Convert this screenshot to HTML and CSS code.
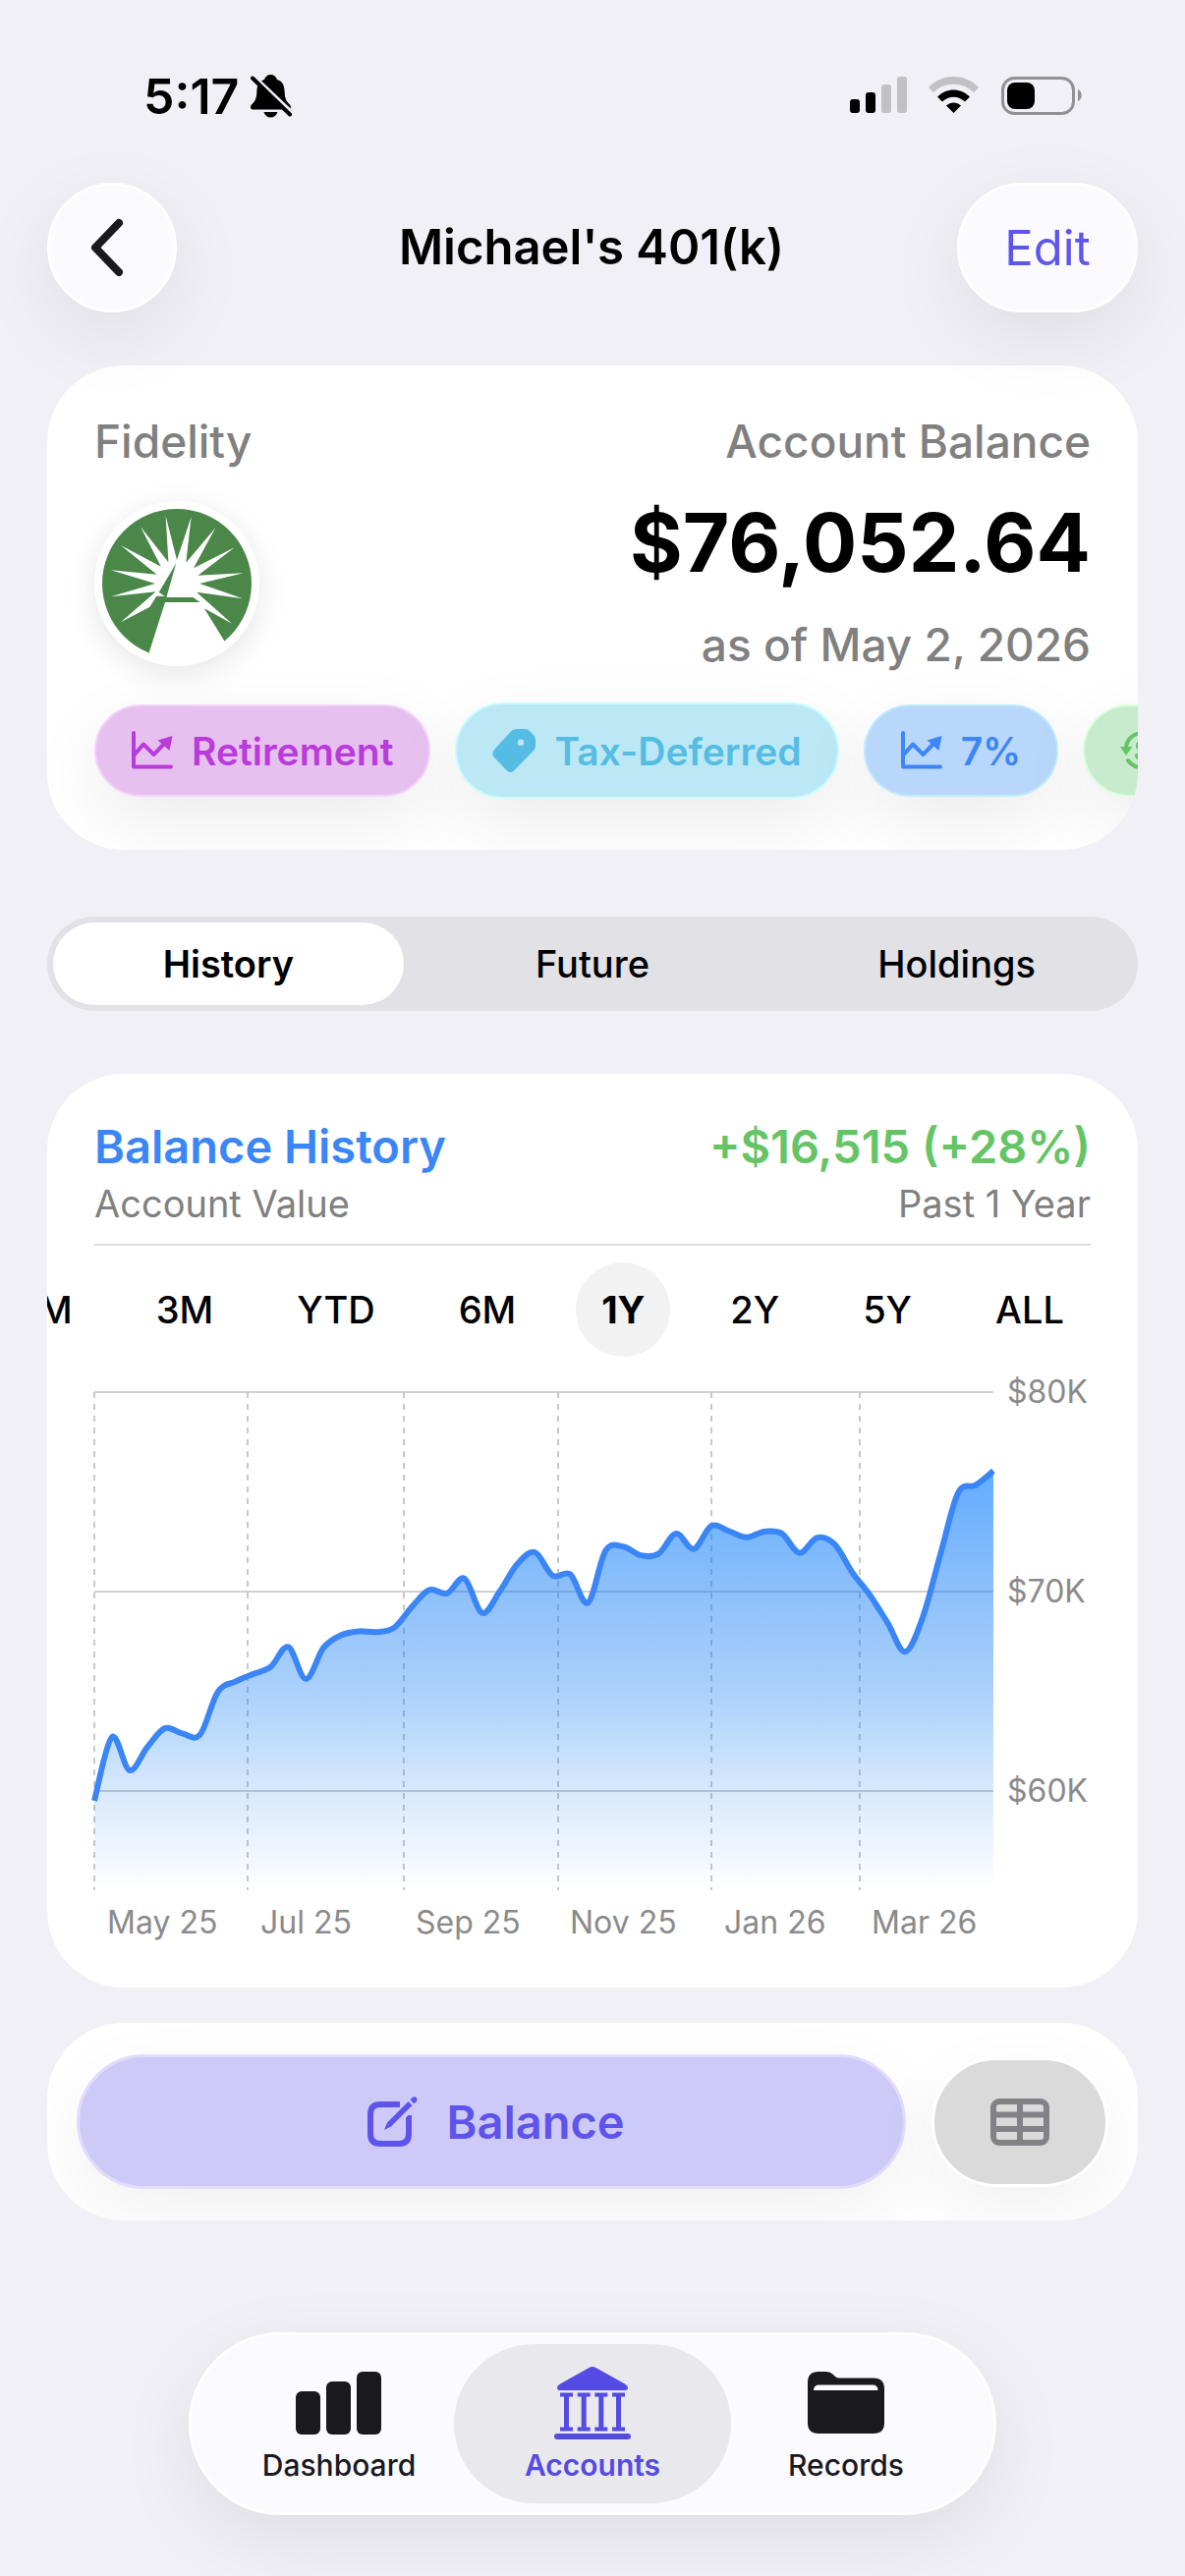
FILE: index.html
```
<!DOCTYPE html>
<html lang="en">
<head>
  <meta charset="utf-8">
  <meta name="viewport" content="width=device-width, initial-scale=1">
  <title>Michael's 401(k)</title>
  <link rel="stylesheet" href="styles.css">
</head>
<body>
  <div class="status-bar">
    <span class="time">5:17</span>
    <svg class="bell" width="42" height="44" viewBox="0 0 42 44">
      <path d="M2 35.500C-.500 35.500-.500 31.500 1.500 30 5 26.500 6 24 6.300 18 6.500 10 9 6.500 14 5 15 2 17 0 20.500 0S26 2 27 5c5 1.500 7.500 5 7.700 13 .3 6 1.300 8.500 4.800 12 2 1.500 2 5.500-.5 5.500zM13.500 38h14c-1 3.500-3.500 5.500-7 5.500S14.500 41.500 13.500 38z"/>
      <path class="bell-gap" d="M3 1.500L42 38.500" />
      <path class="bell-slash" d="M2 3.500L40 40.500" />
    </svg>
    <div class="status-icons">
      <svg width="58" height="38" viewBox="0 0 58 38">
        <rect x="0" y="23" width="10" height="14" rx="3"/>
        <rect x="16" y="16" width="10" height="21" rx="3"/>
        <rect class="dim" x="32" y="8" width="10" height="29" rx="3"/>
        <rect class="dim" x="48" y="0" width="10" height="37" rx="3"/>
      </svg>
      <svg width="52" height="38" viewBox="0 0 52 38">
        <path class="dim" d="M0 11C14-3.700 37-3.700 51 11l-5 5.200C35 5 16 5 5 16.200z"/>
        <path d="M9 20.500c9.500-9.500 23.500-9.500 33 0l-5 5c-6.500-6.300-16.500-6.300-23 0z"/>
        <path d="M18 29.500c4.500-4 10.500-4 15 0L25.500 37z"/>
      </svg>
      <svg width="84" height="40" viewBox="0 0 84 40">
        <rect class="battery-shell" x="1.500" y="1.500" width="72" height="36" rx="12"/>
        <rect x="6" y="6" width="28" height="27" rx="8"/>
        <path class="battery-tip" d="M78 13c5 2 5 10 0 12z"/>
      </svg>
    </div>
  </div>

  <header class="nav-bar">
    <button type="button" class="glass back" aria-label="Back">
      <svg width="36" height="60" viewBox="0 0 36 60"><path d="M30 5L6 30l24 25"/></svg>
    </button>
    <h1>Michael's 401(k)</h1>
    <button type="button" class="glass edit">Edit</button>
  </header>

  <main>
    <section class="card summary">
      <div class="summary-top">
        <div>
          <div class="label">Fidelity</div>
          <svg class="logo" width="168" height="168" viewBox="0 0 168 168">
            <circle cx="84" cy="84" r="76" fill="#4a8749"/>
            <path fill="#fff" d="M84 60L98.600 16 93.300 62.700 123.300 27.300 101 68.300 142.600 47.300 105.400 75.700 151.900 73.300 107.200 84 151 99.300 104 92.700 140 124.700 111.900 109.300 132.600 142.700 118 162H60L55.800 154 71.900 103.300 73.300 97 63.300 96.700 56.500 107.700 26.900 123.300 62.600 92.300 16.900 97.300 61.900 84 16.900 70.300 63.600 74.700 26.900 45 67.900 66.700 46.900 26 75.400 62.300 72.600 15z"/>
            <path fill="#4a8749" d="M83.300 63.300L65.800 92.700 73.300 98.300zM72.500 98h28l7 5H71.500z"/>
          </svg>
        </div>
        <div class="summary-right">
          <div class="label">Account Balance</div>
          <div class="balance">$76,052.64</div>
          <div class="label">as of May 2, 2026</div>
        </div>
      </div>
      <div class="chips">
        <button type="button" class="chip purple">
          <svg width="42" height="40" viewBox="0 0 42 40"><path class="stroke" d="M2 2v34.500h38M2 25L12 13.500 22.500 24 35 11"/><path d="M26.500 9.500L41.500 5 38.500 20z"/></svg>
          Retirement
        </button>
        <button type="button" class="chip cyan">
          <svg width="44" height="44" viewBox="0 0 44 44"><path fill-rule="evenodd" d="M20 1.500Q22 0 25 0H33Q36 0 38 2L42 6Q44 8 44 11V17Q44 20 42 22L22 42.500Q18.500 45.500 15 42.500L2 29Q-1.500 25 2 21zM29 10.500a3.200 3.200 0 1 0 0 6.400 3.200 3.200 0 0 0 0-6.400z"/></svg>
          Tax-Deferred
        </button>
        <button type="button" class="chip blue">
          <svg width="42" height="40" viewBox="0 0 42 40"><path class="stroke" d="M2 2v34.500h38M2 25L12 13.500 22.500 24 35 11"/><path d="M26.500 9.500L41.500 5 38.500 20z"/></svg>
          7%
        </button>
        <button type="button" class="chip green" aria-label="Recurring contribution">
          <svg width="42" height="42" viewBox="0 0 42 42"><path class="stroke" d="M6 18C8 -2 38 -2 38 20M8 31c8 11 26 9 30-4"/><path d="M0 17h12.500L6 26z"/><path class="stroke" d="M26 16C24 11 17 12 18 17 19 21 26 20 26 25 26 30 18 30 17 26"/></svg>
        </button>
      </div>
    </section>

    <div class="segments">
      <button type="button" class="selected">History</button>
      <button type="button">Future</button>
      <button type="button">Holdings</button>
    </div>

    <section class="card history">
      <div class="row heading">
        <h2>Balance History</h2>
        <span class="gain">+$16,515 (+28%)</span>
      </div>
      <div class="row sub">
        <span>Account Value</span>
        <span>Past 1 Year</span>
      </div>
      <div class="ranges">
        <button type="button">1M</button>
        <button type="button">3M</button>
        <button type="button">YTD</button>
        <button type="button">6M</button>
        <button type="button" class="selected">1Y</button>
        <button type="button">2Y</button>
        <button type="button">5Y</button>
        <button type="button">ALL</button>
      </div>
      <svg class="chart" viewBox="0 0 1014 590">
        <defs>
          <linearGradient id="fill" x1="0" y1="101" x2="0" y2="527" gradientUnits="userSpaceOnUse">
            <stop offset="0" stop-color="#007aff" stop-opacity=".62"/>
            <stop offset=".3" stop-color="#1a80f5" stop-opacity=".49"/>
            <stop offset=".52" stop-color="#1a80f5" stop-opacity=".37"/>
            <stop offset=".77" stop-color="#1a80f5" stop-opacity=".17"/>
            <stop offset="1" stop-color="#1a80f5" stop-opacity="0"/>
          </linearGradient>
        </defs>
        <g class="grid">
          <path d="M0 20H915M0 223H915M0 426H915"/>
          <path class="dashed" d="M0 20V527M156 20V527M315 20V527M472 20V527M628 20V527M779 20V527"/>
        </g>
        <path id="area" fill="url(#fill)"/>
        <path id="line"/>
        <g class="axis">
          <text x="929" y="31">$80K</text>
          <text x="929" y="234">$70K</text>
          <text x="929" y="437">$60K</text>
          <text x="13" y="571">May 25</text>
          <text x="169" y="571">Jul 25</text>
          <text x="327" y="571">Sep 25</text>
          <text x="484" y="571">Nov 25</text>
          <text x="641" y="571">Jan 26</text>
          <text x="791" y="571">Mar 26</text>
        </g>
      </svg>
    </section>

    <section class="card actions">
      <button type="button" class="add-balance">
        <svg width="52" height="52" viewBox="0 0 52 52"><path class="outline" d="M33 8H13Q3 8 3 18V38Q3 48 13 48H32Q42 48 42 38V19"/><path class="outline-gap" d="M22 30L46 6"/><path d="M17 34L20 26.500 41.500 5 45.500 9 24 30.500zM43.500 3.500C45.500-.500 49-.500 50 1.500S50 6.500 47 7z"/></svg>
        Balance
      </button>
      <button type="button" class="table-view" aria-label="Show table">
        <svg width="60" height="48" viewBox="0 0 60 48"><rect x="3" y="3" width="54" height="42" rx="6"/><path d="M30 3V45M3 16.500H57M3 31H57"/></svg>
      </button>
    </section>
  </main>

  <nav class="tab-bar">
    <a href="#dashboard">
      <svg width="88" height="76" viewBox="0 0 88 76"><rect x="0" y="26" width="25" height="44" rx="6"/><rect x="31" y="16" width="25" height="54" rx="6"/><rect x="62" y="6" width="25" height="64" rx="6"/></svg>
      Dashboard
    </a>
    <a href="#accounts" class="selected">
      <svg width="78" height="76" viewBox="0 0 78 76">
        <path d="M35.500 2Q39 0 42.500 2L72 18.500Q75 20.500 75 22.500T72 25H6Q3 25 3 22.500T6 18.500z"/>
        <path d="M6 27.500h13v4h-4v31h4v4H6v-4h4v-31H6zM23.700 27.500h13v4h-4v31h4v4h-13v-4h4v-31h-4zM41.300 27.500h13v4h-4v31h4v4h-13v-4h4v-31h-4zM59 27.500h13v4h-4v31h4v4H59v-4h4v-31h-4z"/>
        <rect x="0" y="69" width="78" height="6" rx="3"/>
      </svg>
      Accounts
    </a>
    <a href="#records">
      <svg width="78" height="76" viewBox="0 0 78 76"><path fill-rule="evenodd" d="M0 17Q0 6 11 6H19Q23 6 26 9L28 11Q30 12.500 33 12.500H67Q78 12.500 78 23.500V58Q78 69 67 69H11Q0 69 0 58zM6 25H71.500Q71.500 19.500 66 19.500H12Q6 19.500 6 25z"/></svg>
      Records
    </a>
  </nav>

  <script>
    // weekly balances, in thousands
    const balances = [
      59.51, 62.70, 61.04, 62.19, 63.15, 62.88, 62.83, 64.96, 65.49, 65.86,
      66.22, 67.22, 65.62, 67.18, 67.82, 68.01, 67.97, 68.18, 69.22, 70.08,
      69.91, 70.65, 68.93, 70.01, 71.39, 71.97, 70.80, 70.86, 69.44, 72.05,
      72.25, 71.82, 71.89, 72.91, 72.14, 73.29, 73.03, 72.72, 73.01, 72.91,
      71.93, 72.70, 72.37, 70.95, 69.82, 68.43, 66.99, 68.73, 71.89, 74.95,
      75.34, 76.05
    ];
    const points = balances.map((b, i) => [i * 915 / (balances.length - 1), 20 + (80 - b) * 20.3]);

    // Catmull-Rom spline through the points
    let line = 'M' + points[0];
    for (let i = 0; i < points.length - 1; i++) {
      const a = points[Math.max(i - 1, 0)];
      const b = points[i];
      const c = points[i + 1];
      const d = points[Math.min(i + 2, points.length - 1)];
      line += 'C' + [
        b[0] + (c[0] - a[0]) / 6, b[1] + (c[1] - a[1]) / 6,
        c[0] - (d[0] - b[0]) / 6, c[1] - (d[1] - b[1]) / 6,
        c[0], c[1]
      ].map(n => n.toFixed(1)).join(' ');
    }
    document.getElementById('line').setAttribute('d', line);
    document.getElementById('area').setAttribute('d', line + 'V527H0Z');
  </script>
</body>
</html>
```
FILE: styles.css
```
* {
  box-sizing: border-box;
}

body {
  margin: 0;
  background: #f1f0f6;
  color: #000;
  font-family: Inter, "Liberation Sans", sans-serif;
}

button {
  margin: 0;
  padding: 0;
  border: none;
  background: none;
  color: inherit;
  font-family: inherit;
  cursor: pointer;
}

h1,
h2 {
  margin: 0;
}

svg {
  display: block;
  flex: none;
}

/* status bar */
.status-bar {
  display: flex;
  align-items: center;
  height: 128px;
  padding: 68px 103px 0 146px;
}

.time {
  font-size: 50px;
  font-weight: 600;
  line-height: 60px;
}

.bell {
  margin-left: 12px;
}

.bell-gap {
  stroke: #f1f0f6;
  stroke-width: 4;
}

.bell-slash {
  stroke: #000;
  stroke-width: 4;
  stroke-linecap: round;
}

.status-icons {
  display: flex;
  gap: 22px;
  margin-left: auto;
}

.dim {
  fill: #c1c0c5;
}

.battery-shell {
  fill: none;
  stroke: #919095;
  stroke-width: 3;
}

.battery-tip {
  fill: #919095;
}

/* title row */
.nav-bar {
  display: flex;
  align-items: center;
  justify-content: space-between;
  padding: 58px 48px 54px;
}

.nav-bar h1 {
  flex: 1;
  padding-left: 50px;
  text-align: center;
  font-size: 49px;
  font-weight: 600;
  line-height: 60px;
}

.glass {
  display: flex;
  align-items: center;
  justify-content: center;
  height: 132px;
  border: 3px solid #fff;
  border-radius: 66px;
  background: #fafaff;
  box-shadow: 0 24px 80px rgba(0, 0, 0, 0.08);
}

.back {
  width: 132px;
  padding-right: 10px;
}

.back path {
  fill: none;
  stroke: #1a191e;
  stroke-width: 8;
  stroke-linecap: round;
  stroke-linejoin: round;
}

.edit {
  width: 184px;
  color: #5e56eb;
  font-size: 49px;
}

/* cards */
main {
  padding: 0 48px;
}

.card {
  overflow: hidden;
  border-radius: 78px;
  background: #fff;
}

.summary {
  padding: 47px 48px 52px;
}

.summary-top {
  display: flex;
  justify-content: space-between;
}

.summary-right {
  text-align: right;
}

.label {
  color: #808080;
  font-size: 46px;
  font-weight: 500;
  line-height: 60px;
}

.balance {
  margin: 24px 0 23px;
  font-size: 82px;
  font-weight: 700;
  line-height: 100px;
}

.logo {
  margin-top: 31px;
  border-radius: 50%;
  background: #fff;
  box-shadow: 0 8px 32px rgba(0, 0, 0, 0.1);
}

.chips {
  display: flex;
  align-items: center;
  gap: 25px;
  margin-top: 29px;
}

.chip {
  display: flex;
  flex: none;
  align-items: center;
  gap: 19px;
  height: 94px;
  padding: 0 36px;
  border: 2px solid;
  border-radius: 49px;
  font-size: 39px;
  font-weight: 600;
  box-shadow: 0 24px 72px rgba(0, 0, 0, 0.08);
}

.chip svg {
  fill: currentColor;
}

.chip .stroke {
  fill: none;
  stroke: currentColor;
  stroke-width: 4;
  stroke-linecap: round;
  stroke-linejoin: round;
}

.purple {
  border-color: #f3d3fb;
  background: #e6c1f0;
  color: #b93bdb;
}

.cyan {
  height: 98px;
  border-color: #c8fdff;
  background: #bce8f5;
  color: #55bde3;
}

.blue {
  border-color: #bfeaff;
  background: #b9d7fa;
  color: #3c86f7;
}

.green {
  border-color: #d6ffdc;
  background: #c8ebcd;
  color: #65c466;
}

/* history / future / holdings */
.segments {
  display: grid;
  grid-template-columns: repeat(3, 1fr);
  gap: 14px;
  height: 96px;
  margin: 68px 0 64px;
  padding: 6px;
  border-radius: 48px;
  background: #e2e1e6;
}

.segments button {
  border-radius: 42px;
  font-size: 38px;
  font-weight: 500;
}

.segments .selected {
  background: #fff;
  font-weight: 600;
}

/* balance history */
.history {
  padding: 44px 48px 36px;
}

.row {
  display: flex;
  justify-content: space-between;
}

.heading,
.heading h2 {
  font-size: 47px;
  font-weight: 600;
  line-height: 60px;
}

.heading h2 {
  color: #3a86f7;
}

.gain {
  color: #65c466;
}

.sub {
  padding-bottom: 13px;
  border-bottom: 2px solid #dddde0;
  color: #808080;
  font-size: 38px;
  line-height: 56px;
}

.ranges {
  display: flex;
  justify-content: flex-end;
  gap: 37px;
  margin: 17px 0 16px;
  padding-right: 3px;
}

.ranges button {
  flex: none;
  min-width: 96px;
  height: 96px;
  padding: 0 24px;
  border-radius: 48px;
  font-size: 38px;
  font-weight: 500;
}

.ranges .selected {
  background: #f2f2f2;
  font-weight: 700;
}

.chart {
  width: 100%;
  overflow: visible;
}

.grid path {
  fill: none;
  stroke: #d0d0d2;
  stroke-width: 2;
}

.grid .dashed {
  stroke: #c8c8ca;
  stroke-dasharray: 6 6;
}

#line {
  fill: none;
  stroke: #3a86f7;
  stroke-width: 6;
  stroke-linejoin: round;
}

.axis {
  fill: #8a8a8c;
  font-size: 32px;
}

/* actions */
.actions {
  display: flex;
  align-items: center;
  gap: 26px;
  margin-top: 36px;
  padding: 32px 30px;
}

.actions button {
  display: flex;
  align-items: center;
  justify-content: center;
  border: 3px solid #fff;
  border-radius: 69px;
  box-shadow: 0 24px 72px rgba(0, 0, 0, 0.06);
}

.actions .add-balance {
  flex: 1;
  gap: 28px;
  height: 137px;
  padding-left: 10px;
  border-color: #e2dcfc;
  background: #cecaf8;
  color: #5e54ec;
  font-size: 47px;
  font-weight: 600;
}

.add-balance svg {
  fill: currentColor;
}

.add-balance .outline {
  fill: none;
  stroke: currentColor;
  stroke-width: 6;
}

.add-balance .outline-gap {
  stroke: #cecaf8;
  stroke-width: 12;
}

.actions .table-view {
  width: 180px;
  height: 132px;
  background: #dadadb;
}

.table-view svg {
  fill: none;
  stroke: #818186;
  stroke-width: 6;
}

/* bottom tabs */
.tab-bar {
  display: flex;
  width: fit-content;
  margin: 114px auto 63px;
  padding: 9px;
  border: 3px solid #fff;
  border-radius: 93px;
  background: #fafaff;
  box-shadow: 0 24px 80px rgba(0, 0, 0, 0.08);
}

.tab-bar a {
  display: flex;
  flex-direction: column;
  align-items: center;
  width: 282px;
  height: 162px;
  padding-top: 22px;
  border-radius: 81px;
  color: #1a191e;
  font-size: 30px;
  font-weight: 500;
  line-height: 50px;
  text-decoration: none;
}

.tab-bar a + a {
  margin-left: -24px;
}

.tab-bar svg {
  fill: currentColor;
}

.tab-bar .selected {
  background: #e9e8ed;
  color: #544be3;
  font-weight: 600;
}
```
